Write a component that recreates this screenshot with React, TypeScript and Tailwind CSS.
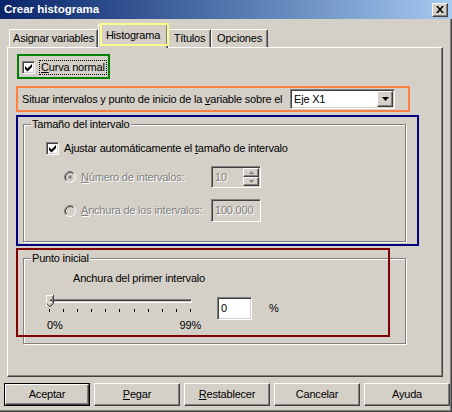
import React from "react";

const face = "font-['Liberation_Sans',Arial,sans-serif]";
const raised =
  "border border-t-white border-l-white border-r-[#404040] border-b-[#404040] shadow-[inset_-1px_-1px_0_#808080]";
const sunken =
  "border border-t-[#808080] border-l-[#808080] border-r-white border-b-white shadow-[inset_1px_1px_0_#404040,inset_-1px_-1px_0_#d4d0c8]";
const etched = "border border-[#808080] shadow-[inset_1px_1px_0_#fff,1px_1px_0_#fff]";
const dim = "text-[#808080] [text-shadow:1px_1px_0_#fff]";

const CheckBox = () => (
  <div className={`relative w-[13px] h-[13px] bg-white shrink-0 ${sunken}`}>
    <svg className="absolute inset-0" width="11" height="11" viewBox="0 0 11 11">
      <path d="M2 4 L4.5 6.5 L9 2 L9 5 L4.5 9.5 L2 7 Z" fill="#000" />
    </svg>
  </div>
);

const Radio = ({ on }: { on?: boolean }) => (
  <svg width="12" height="12" viewBox="0 0 12 12" className="shrink-0">
    <circle cx="6" cy="6" r="5" fill="#d4d0c8" />
    <path d="M2.11 9.89A5.5 5.5 0 0 1 9.89 2.11" stroke="#808080" fill="none" />
    <path d="M9.89 2.11A5.5 5.5 0 0 1 2.11 9.89" stroke="#fff" fill="none" />
    <path d="M2.82 9.18A4.5 4.5 0 0 1 9.18 2.82" stroke="#404040" fill="none" />
    <path d="M9.18 2.82A4.5 4.5 0 0 1 2.82 9.18" stroke="#d4d0c8" fill="none" />
    {on && <circle cx="6" cy="6" r="1.8" fill="#808080" />}
  </svg>
);

const Tab = ({ w, children }: { w: string; children: React.ReactNode }) => (
  <div
    className={`${w} h-[18px] flex items-center justify-center border-t border-l border-r border-t-white border-l-white border-r-[#404040] shadow-[inset_-1px_0_0_#808080] rounded-t-[2px]`}
  >
    {children}
  </div>
);

const Button = ({ children, def }: { children: React.ReactNode; def?: boolean }) =>
  def ? (
    <div className="w-[86px] h-[23px] border border-black">
      <div className={`w-full h-full flex items-center justify-center ${raised}`}>{children}</div>
    </div>
  ) : (
    <div className={`w-[86px] h-[23px] flex items-center justify-center ${raised}`}>{children}</div>
  );

export default function App() {
  return (
    <div
      className={`w-[452px] h-[412px] bg-[#d4d0c8] text-[11px] leading-[13px] tracking-[-0.2px] whitespace-nowrap text-black ${face} flex flex-col overflow-hidden shadow-[inset_-1px_-1px_0_#404040,inset_-2px_-2px_0_#808080]`}
    >
      {/* title bar */}
      <div className="h-[19px] shrink-0 flex items-center bg-linear-to-r from-[#0a246a] to-[#a6caf0] pl-[4px] pr-[4px]">
        <span className="text-white font-bold text-[11.5px] tracking-normal">Crear histograma</span>
        <div className={`ml-auto w-[16px] h-[14px] bg-[#d4d0c8] flex items-center justify-center ${raised}`}>
          <svg width="8" height="7" viewBox="0 0 8 7">
            <path d="M0 0h2l2 2.3 2-2.3h2l-3 3.5 3 3.5h-2l-2-2.3-2 2.3h-2l3-3.5z" fill="#000" />
          </svg>
        </div>
      </div>

      <div className="flex flex-col pl-[7px] pt-[5px]">
        {/* tabs */}
        <div className="flex items-end h-[23px] pl-[2px]">
          <Tab w="w-[89px]">Asignar variables</Tab>
          <div className="relative z-10 -mb-px h-[24px] w-[70px] bg-[#d4d0c8] flex items-start justify-center pt-[4px] border-t border-l border-r border-t-white border-l-white border-r-[#404040] shadow-[inset_-1px_0_0_#808080] rounded-t-[2px]">
            Histograma
            <div className="pointer-events-none absolute left-px -top-[2px] w-[69px] h-[23px] border-2 border-[#fcfc8a]" />
          </div>
          <Tab w="w-[43px]">Títulos</Tab>
          <Tab w="w-[57px]">Opciones</Tab>
        </div>

        {/* tab panel */}
        <div className="w-[436px] h-[330px] flex flex-col border border-t-white border-l-white border-r-[#404040] border-b-[#404040] shadow-[inset_-1px_-1px_0_#808080]">
          {/* Curva normal */}
          <div className="mt-[6px] ml-[9px] w-[93px] h-[25px] border-2 border-[#008000] flex items-center pl-[3px] pt-[2px]">
            <CheckBox />
            <span className="ml-[4px] px-px border border-dotted border-black leading-[13px]">
              <u>C</u>urva normal
            </span>
          </div>

          {/* Situar intervalos */}
          <div className="mt-[7px] ml-[8px] w-[394px] h-[26px] border-2 border-[#ff8040] flex items-center justify-between pl-[4px] pr-[13px]">
            <span>
              Situar intervalos y punto de inicio de la <u>v</u>ariable sobre el
            </span>
            <div className={`w-[105px] h-[20px] shrink-0 bg-white flex items-center pl-[3px] ${sunken}`}>
              <span className="flex-1">Eje X1</span>
              <div className={`w-[16px] h-[16px] mr-px bg-[#d4d0c8] flex items-center justify-center ${raised}`}>
                <svg width="7" height="4" viewBox="0 0 7 4">
                  <path d="M0 0h7l-3.5 4z" fill="#000" />
                </svg>
              </div>
            </div>
          </div>

          {/* Tamaño del intervalo */}
          <div className="mt-[3px] ml-[8px] w-[403px] h-[131px] border-2 border-[#000080] pl-[5px] pt-[7px]">
            <div className={`relative w-[383px] h-[118px] flex flex-col ${etched}`}>
              <span className="absolute -top-[7px] left-[7px] px-px bg-[#d4d0c8]">Tamaño del intervalo</span>
              <div className="mt-[17px] ml-[22px] flex items-center h-[13px]">
                <CheckBox />
                <span className="ml-[5px]">
                  Ajustar automáticamente el <u>t</u>amaño de intervalo
                </span>
              </div>
              <div className="mt-[11px] ml-[40px] flex items-center h-[22px]">
                <Radio on />
                <span className={`ml-[5px] w-[130px] ${dim}`}>
                  <u>N</u>úmero de intervalos:
                </span>
                <div className={`w-[50px] h-[22px] flex items-center pl-[3px] pr-px ${sunken}`}>
                  <span className={`flex-1 ${dim}`}>10</span>
                  <div className="flex flex-col w-[16px] h-[18px]">
                    <div className={`h-[9px] flex items-center justify-center ${raised}`}>
                      <svg width="5" height="3" viewBox="0 0 5 3">
                        <path d="M0 3h5l-2.5-3z" fill="#808080" />
                      </svg>
                    </div>
                    <div className={`h-[9px] flex items-center justify-center ${raised}`}>
                      <svg width="5" height="3" viewBox="0 0 5 3">
                        <path d="M0 0h5l-2.5 3z" fill="#808080" />
                      </svg>
                    </div>
                  </div>
                </div>
              </div>
              <div className="mt-[11px] ml-[40px] flex items-center h-[23px]">
                <Radio />
                <span className={`ml-[5px] w-[130px] ${dim}`}>
                  <u>A</u>nchura de los intervalos:
                </span>
                <div className={`w-[50px] h-[23px] flex items-center pl-[3px] ${sunken}`}>
                  <span className={dim}>100.000</span>
                </div>
              </div>
            </div>
          </div>

          {/* Punto inicial */}
          <div className={`relative mt-[12px] ml-[15px] w-[383px] h-[86px] flex flex-col ${etched}`}>
            <span className="absolute -top-[7px] left-[7px] px-px bg-[#d4d0c8]">Punto inicial</span>
            <div className="pointer-events-none absolute -left-[8px] -top-[11px] w-[374px] h-[89px] border-2 border-[#800000]" />
            <span className="mt-[13px] ml-[49px]">Anchura del primer intervalo</span>
            <div className="mt-[8px] flex items-start">
              <div className="ml-[20px] w-[160px] flex flex-col">
                <div className="relative h-[14px]">
                  <div className="absolute left-[3px] top-[6px] w-[145px] h-[4px] border border-t-[#808080] border-l-[#808080] border-r-white border-b-white shadow-[inset_1px_1px_0_#404040]" />
                  <svg className="absolute left-[2px] top-[2px]" width="8" height="12" viewBox="0 0 8 12">
                    <path d="M0.5 11V0.5H7" stroke="#fff" fill="#d4d0c8" />
                    <path d="M7.5 0V8.5L4 11.8L0.5 8.5" stroke="#404040" fill="none" />
                    <path d="M6.5 1V8L4 10.5" stroke="#808080" fill="none" />
                  </svg>
                </div>
                <div className="mt-[2px] ml-[5px] w-[142px] h-[3px] flex justify-between">
                  {Array.from({ length: 11 }).map((_, i) => (
                    <div key={i} className="w-px h-[3px] bg-black" />
                  ))}
                </div>
                <div className="mt-[7px] ml-[3px] w-[154px] flex justify-between">
                  <span>0%</span>
                  <span>99%</span>
                </div>
              </div>
              <div className={`mt-[4px] ml-[13px] w-[35px] h-[23px] bg-white flex items-center pl-[3px] ${sunken}`}>
                0
              </div>
              <span className="mt-[9px] ml-[17px]">%</span>
            </div>
          </div>
        </div>
      </div>

      {/* buttons */}
      <div className="mt-[6px] pl-[4px] flex gap-[4px]">
        <Button def>Aceptar</Button>
        <Button>
          <span>
            <u>P</u>egar
          </span>
        </Button>
        <Button>
          <span>
            <u>R</u>establecer
          </span>
        </Button>
        <Button>Cancelar</Button>
        <Button>Ayuda</Button>
      </div>
    </div>
  );
}
